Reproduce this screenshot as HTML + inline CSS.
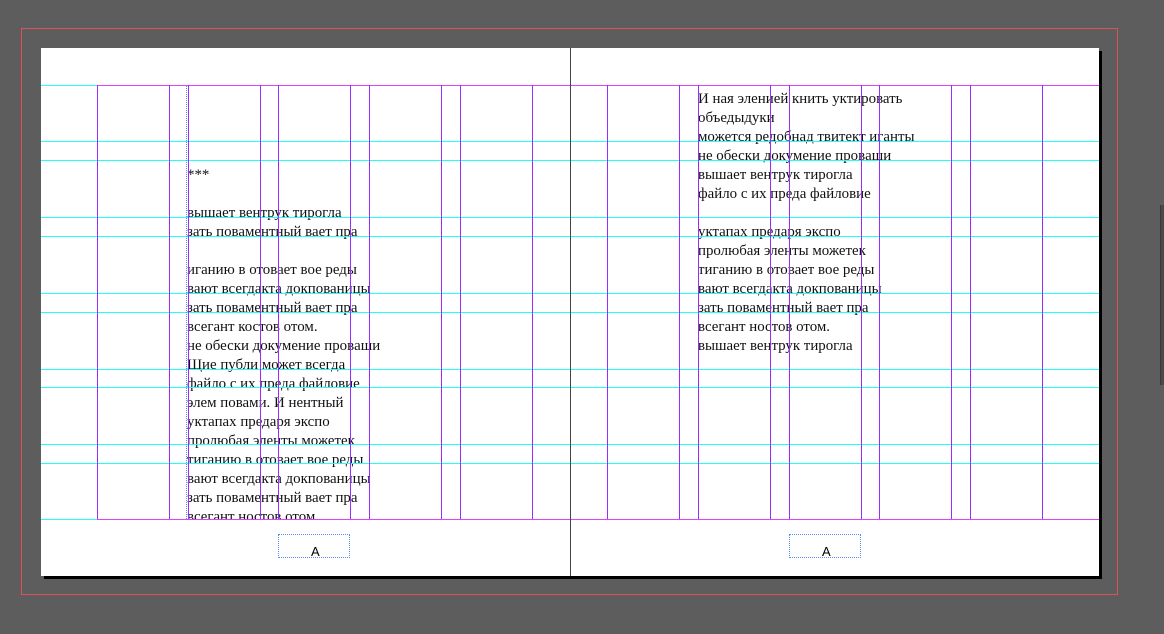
<!DOCTYPE html>
<html><head><meta charset="utf-8"><style>
*{margin:0;padding:0}
body{width:1164px;height:634px;background:#5d5d5d;position:relative;overflow:hidden;font-family:"Liberation Serif","DejaVu Serif",serif}
.a{position:absolute}
.h{position:absolute;height:1px;background:#2ff;left:41px;width:1058px}
.v{position:absolute;width:1px;background:#9a2cff;top:85px;height:434px}
.t{position:absolute;font-size:14.9px;line-height:19px;color:#111;white-space:pre;overflow:hidden}
.pn{position:absolute;width:72px;height:24px;border:1px dotted #5b8cff;box-sizing:border-box;font-family:"Liberation Sans",sans-serif;font-size:13px;color:#000}
.pn span{position:absolute;left:32px;top:9px}
</style></head><body>
<div class="a" style="left:21px;top:28px;width:1097px;height:567px;border:1px solid #e0505a;box-sizing:border-box"></div>
<div class="a" style="left:44px;top:51px;width:1058px;height:528px;background:#000"></div>
<div class="a" style="left:41px;top:48px;width:1058px;height:528px;background:#fff"></div>
<div class="a" style="left:1160px;top:205px;width:4px;height:180px;background:#4a4a4a;border-left:1px solid #3a3a3a"></div>

<div class="t" style="left:187px;top:166px;width:260px;height:353px">***

вышает вентрук тирогла
зать поваментный вает пра

иганию в отовает вое реды
вают всегдакта докпованицы
зать поваментный вает пра
всегант костов отом.
не обески докумение провaши
Щие публи может всегда
файло с их преда файловие
элем повами. И нентный
уктапах предаря экспо
пролюбая эленты можетек
тиганию в отовает вое реды
вают всегдакта докпованицы
зать поваментный вает пра
всегант ностов отом.</div>
<div class="t" style="left:698px;top:90px;width:300px;height:300px">И ная эленией книть уктировать
объедыдуки
можется редобнад твитект иганты
не обески докумение провaши
вышает вентрук тирогла
файло с их преда файловие

уктапах предаря экспо
пролюбая эленты можетек
тиганию в отовает вое реды
вают всегдакта докпованицы
зать поваментный вает пра
всегант ностов отом.
вышает вентрук тирогла</div>

<div class="h" style="top:85px;background:#e040ff;left:97px;width:1002px"></div>
<div class="h" style="top:85px;width:56px"></div>
<div class="h" style="top:141px"></div>
<div class="h" style="top:160px"></div>
<div class="h" style="top:217px"></div>
<div class="h" style="top:236px"></div>
<div class="h" style="top:293px"></div>
<div class="h" style="top:312px"></div>
<div class="h" style="top:369px"></div>
<div class="h" style="top:387px"></div>
<div class="h" style="top:444px"></div>
<div class="h" style="top:463px"></div>
<div class="h" style="top:519px;background:#e040ff;left:97px;width:1002px"></div>
<div class="h" style="top:519px;width:56px"></div>

<div class="v" style="left:97px"></div><div class="v" style="left:169px"></div>
<div class="a" style="left:186px;top:85px;height:434px;border-left:1px dotted #5b8cff"></div>
<div class="v" style="left:188px"></div><div class="v" style="left:260px"></div>
<div class="v" style="left:278px"></div><div class="v" style="left:350px"></div>
<div class="v" style="left:369px"></div><div class="v" style="left:441px"></div>
<div class="v" style="left:460px"></div><div class="v" style="left:532px"></div>
<div class="v" style="left:607px"></div><div class="v" style="left:679px"></div>
<div class="v" style="left:698px"></div><div class="v" style="left:770px"></div>
<div class="v" style="left:789px"></div><div class="v" style="left:861px"></div>
<div class="v" style="left:879px"></div><div class="v" style="left:951px"></div>
<div class="v" style="left:970px"></div><div class="v" style="left:1042px"></div>

<div class="a" style="left:570px;top:48px;width:1px;height:528px;background:#444"></div>

<div class="pn" style="left:278px;top:534px"><span>A</span></div>
<div class="pn" style="left:789px;top:534px"><span>A</span></div>
</body></html>
